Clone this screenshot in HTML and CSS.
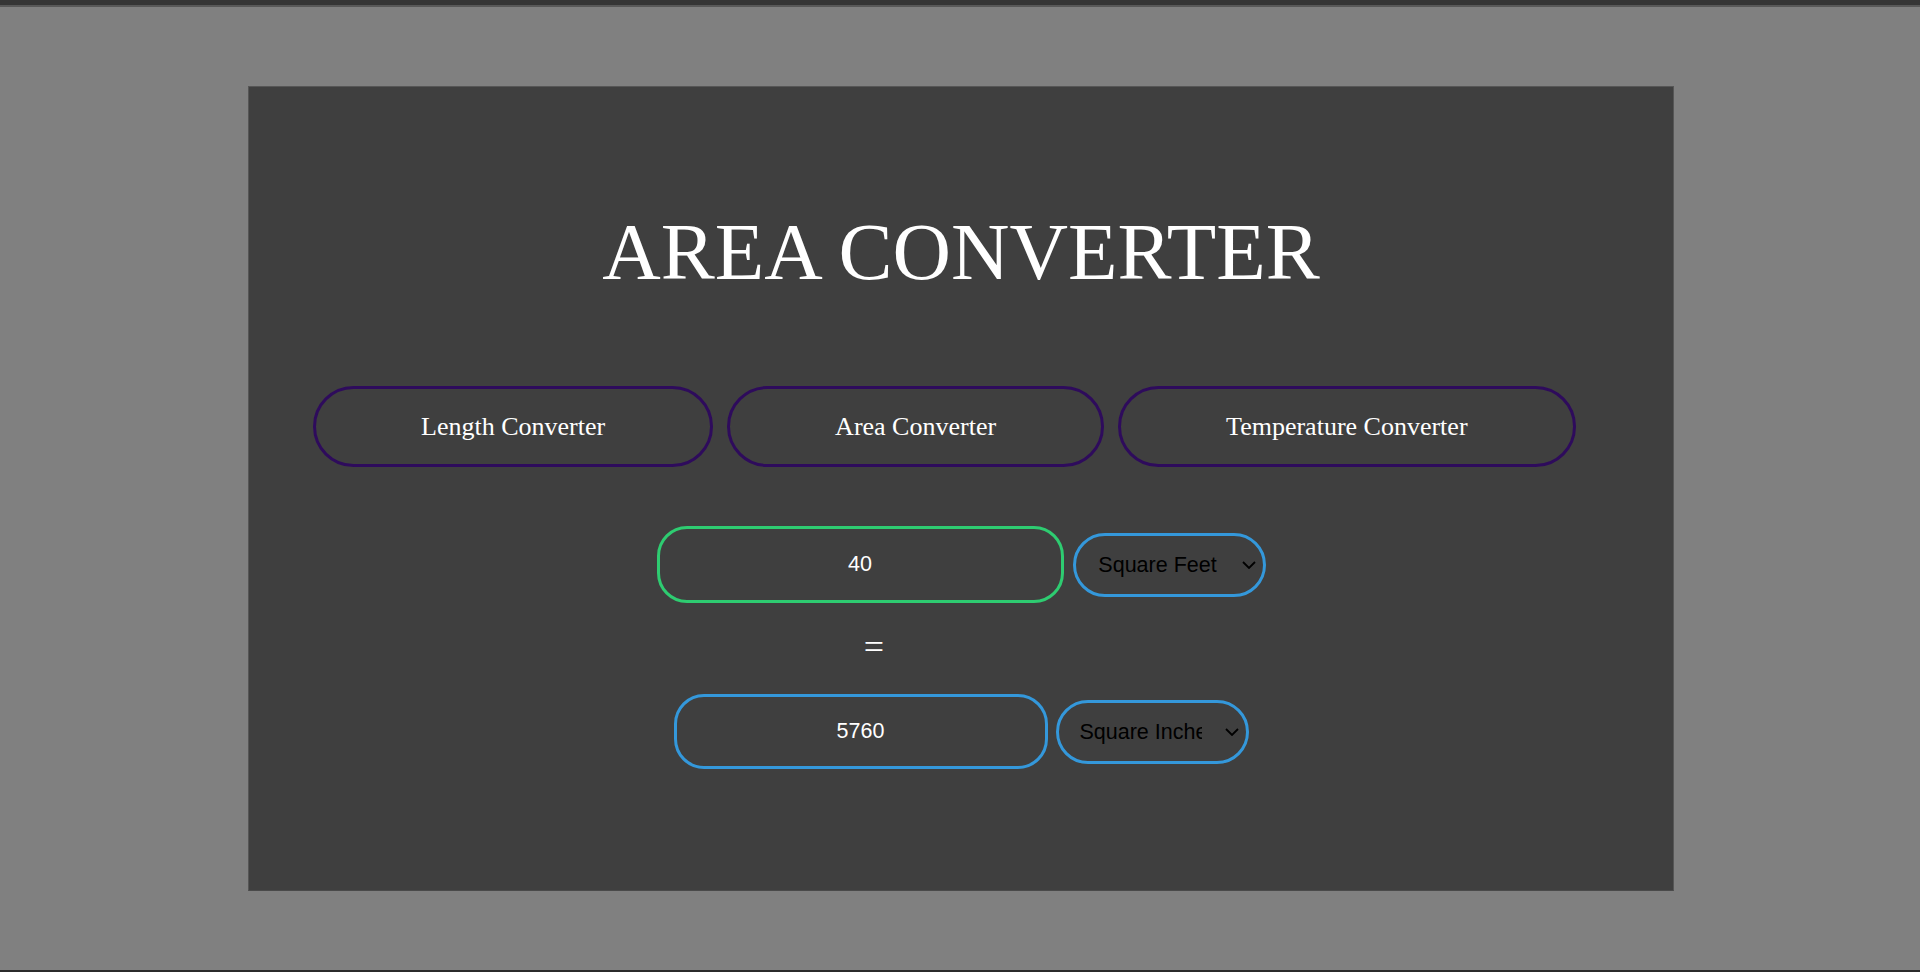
FILE: index.html
```html
<!DOCTYPE html>
<html lang="en">
<head>
<meta charset="utf-8">
<title>Area Converter</title>
<link rel="stylesheet" href="styles.css">
</head>
<body>
  <main class="card">
    <h1 class="title">AREA CONVERTER</h1>
    <nav class="tabs">
      <button class="tab" type="button">Length Converter</button>
      <button class="tab" type="button">Area Converter</button>
      <button class="tab" type="button">Temperature Converter</button>
    </nav>
    <div class="row row-from">
      <input class="field field-from" type="text" value="40">
      <span class="unit-wrap">
        <select class="unit">
          <option>Square Feet</option>
          <option>Square Inches</option>
          <option>Square Meters</option>
        </select>
        <svg class="chevron" width="14" height="8" viewBox="0 0 14 8" aria-hidden="true"><path d="M1 1 L7 7 L13 1" fill="none" stroke="#000" stroke-width="1.8"/></svg>
      </span>
    </div>
    <div class="equals">=</div>
    <div class="row row-to">
      <input class="field field-to" type="text" value="5760" readonly>
      <span class="unit-wrap">
        <select class="unit">
          <option>Square Inches</option>
          <option>Square Feet</option>
          <option>Square Meters</option>
        </select>
        <svg class="chevron" width="14" height="8" viewBox="0 0 14 8" aria-hidden="true"><path d="M1 1 L7 7 L13 1" fill="none" stroke="#000" stroke-width="1.8"/></svg>
      </span>
    </div>
  </main>
</body>
</html>
```
FILE: styles.css
```css
html {
  background: #808080;
}

body {
  margin: 0;
  min-height: 972px;
  box-sizing: border-box;
  padding-top: 86px;
  overflow: hidden;
  background:
    linear-gradient(to bottom, #353535 0, #353535 5px, #585858 5px, #585858 7px, transparent 7px),
    linear-gradient(to top, #2b2b2b 0, #2b2b2b 2px, transparent 2px);
  font-family: "Liberation Serif", "Times New Roman", serif;
}

.card {
  box-sizing: border-box;
  width: 1426px;
  height: 805px;
  margin-left: 248px;
  background: #3f3f3f;
  border: 1px solid #565656;
  border-bottom-color: #4a4a4a;
  display: flex;
  flex-direction: column;
}

.title {
  margin: 119px 0 0;
  font-family: "Liberation Serif", "Times New Roman", serif;
  font-weight: normal;
  font-size: 81px;
  line-height: 92px;
  color: #ffffff;
  text-align: center;
}

.tabs {
  display: flex;
  gap: 14px;
  margin-top: 88px;
  padding-left: 64px;
}

.tab {
  box-sizing: border-box;
  height: 81px;
  padding: 0 105px;
  background: transparent;
  border: 3px solid #2e0b5c;
  border-radius: 41px;
  color: #ffffff;
  font-family: "Liberation Serif", "Times New Roman", serif;
  font-size: 26px;
  display: flex;
  align-items: center;
  justify-content: center;
  white-space: nowrap;
  cursor: pointer;
}

.row {
  display: flex;
  justify-content: center;
  align-items: center;
}

.row-from {
  margin-top: 59px;
  gap: 9px;
}

.row-to {
  gap: 8px;
}

.field {
  box-sizing: border-box;
  background: transparent;
  color: #ffffff;
  font-family: "Liberation Sans", Arial, sans-serif;
  font-size: 21.5px;
  text-align: center;
  border: 3px solid #3498db;
  border-radius: 30px;
  outline: none;
  padding: 0;
}

.field-from {
  width: 407px;
  height: 77px;
  border-color: #2ecc71;
}

.field-to {
  width: 374px;
  height: 75px;
}

.unit-wrap {
  position: relative;
  display: block;
  width: 193px;
  height: 64px;
}

.unit {
  -webkit-appearance: none;
  appearance: none;
  box-sizing: border-box;
  display: block;
  width: 193px;
  height: 64px;
  padding: 0 44px 0 21px;
  margin: 0;
  background: transparent;
  color: #000000;
  font-family: "Liberation Sans", Arial, sans-serif;
  font-size: 21.5px;
  text-align: center;
  text-align-last: center;
  border: 3px solid #3498db;
  border-radius: 32px;
  outline: none;
}

.chevron {
  position: absolute;
  right: 10px;
  top: 28px;
  pointer-events: none;
}

.equals {
  height: 91px;
  padding: 0 174px 3px 0;
  box-sizing: border-box;
  display: flex;
  align-items: center;
  justify-content: center;
  color: #ffffff;
  font-family: "Liberation Serif", "Times New Roman", serif;
  font-size: 36px;
}
```
